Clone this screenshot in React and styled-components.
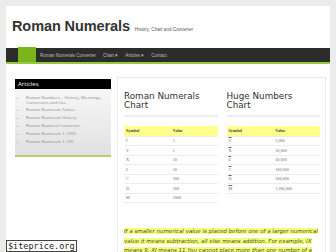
import styled, { createGlobalStyle } from "styled-components";

const Global = createGlobalStyle`
  html, body { margin: 0; padding: 0; }
  body {
    background: #ebebeb;
    font-family: "Liberation Sans", Arial, sans-serif;
    width: 336px;
    height: 252px;
    overflow: hidden;
  }
`;

const Page = styled.div`
  margin: 6px 6px 0;
  width: 324px;
  height: 246px;
  background: #fff;
  position: relative;
  overflow: hidden;
`;

const Header = styled.header`
  display: flex;
  align-items: baseline;
  gap: 5px;
  padding: 12px 0 0 6px;
  height: 30px;
  box-sizing: border-box;
`;

const Title = styled.h1`
  margin: 0;
  font-size: 14.5px;
  font-weight: 700;
  color: #333;
  letter-spacing: -0.1px;
`;

const Tagline = styled.span`
  font-size: 4.6px;
  color: #555;
`;

const Nav = styled.nav`
  margin-top: 12px;
  height: 14px;
  background: #2c2c2c;
  border-bottom: 2px solid #94c83d;
  display: flex;
  align-items: stretch;
  padding-left: 12px;
`;

const Home = styled.div`
  width: 18px;
  margin-top: -1px;
  background: #7bb51e;
`;

const NavItem = styled.a`
  display: flex;
  align-items: center;
  font-size: 4.5px;
  color: #bdbdbd;
  margin-left: ${(p) => p.$gap}px;
`;

const Body = styled.div`
  display: flex;
  align-items: flex-start;
  gap: 6px;
  padding: 13px 4px 0 9px;
`;

const Side = styled.aside`
  width: 96px;
  flex: none;
  margin-top: 2px;
`;

const SideHead = styled.div`
  background: #000;
  color: #fff;
  font-family: "Open Sans", sans-serif;
  font-size: 6px;
  height: 10px;
  line-height: 10px;
  padding-left: 3px;
`;

const SideList = styled.ul`
  margin: 0;
  padding: 6px 6px 8px 11px;
  background: linear-gradient(#f7f7f7, #e1e1e1);
  border-bottom: 2px solid #b6cd70;
  list-style: disc;
  font-family: "Open Sans", sans-serif;
  font-size: 4.3px;
  line-height: 4.6px;
  color: #8a8a8a;

  li { margin-bottom: 3.3px; }
  li::marker { font-size: 3.5px; }
`;

const Main = styled.main`
  flex: 1;
  height: 240px;
  border: 1px solid #e8e8e8;
  background: #fff;
  padding: 14px 5px 0 6px;
  box-sizing: border-box;
`;

const Columns = styled.div`
  display: flex;
  gap: 9px;
`;

const Col = styled.section`
  flex: 1;
`;

const H2 = styled.h2`
  margin: 0;
  font-family: "DejaVu Sans", sans-serif;
  font-weight: 400;
  font-size: 8.8px;
  line-height: 8.8px;
  color: #333;
  padding-bottom: 5px;
  border-bottom: 2px solid #eeeeee;

  span {
    display: block;
    max-width: 80px;
  }
`;

const Table = styled.table`
  margin-top: 9px;
  width: 100%;
  border-collapse: collapse;
  font-family: "Liberation Serif", serif;
  font-size: 4.2px;
  color: #666;

  th {
    background: #ffff8e;
    text-align: left;
    font-weight: 700;
    height: 10px;
    padding: 0 2px;
    color: #444;
  }
  td {
    height: 8.5px;
    padding: 0 2px;
    border: 1px solid #ececec;
    border-left: none;
    border-right: none;
  }
  th:last-child, td:last-child { width: 50%; }
`;

const Over = styled.span`
  text-decoration: overline;
`;

const Note = styled.p`
  margin: 24px 0 0;
  font-family: "DejaVu Sans", sans-serif;
  font-style: italic;
  font-size: 5.5px;
  line-height: 9.4px;
  color: #4d4d1a;

  span {
    background: #f4ff7a;
  }
`;

const Badge = styled.div`
  position: absolute;
  left: 0;
  bottom: 0;
  background: #fff;
  border: 1px solid #444;
  font-family: "DejaVu Sans Mono", monospace;
  font-size: 8.5px;
  line-height: 10px;
  padding: 0 1px;
  color: #222;
`;

const chart = [
  ["I", "1"],
  ["V", "5"],
  ["X", "10"],
  ["L", "50"],
  ["C", "100"],
  ["D", "500"],
  ["M", "1000"],
];

const huge = [
  ["V", "5,000"],
  ["X", "10,000"],
  ["L", "50,000"],
  ["C", "100,000"],
  ["D", "500,000"],
  ["M", "1,000,000"],
];

const articles = [
  "Roman Numbers – History, Meanings, Conversion and Use",
  "Roman Numerals Tattoo",
  "Roman Numerals History",
  "Roman Numeral Converter",
  "Roman Numerals 1-1000",
  "Roman Numerals 1-100",
];

export default function App() {
  return (
    <>
      <Global />
      <Page>
        <Header>
          <Title>Roman Numerals</Title>
          <Tagline>History, Chart and Converter</Tagline>
        </Header>
        <Nav>
          <Home />
          <NavItem $gap={4}>Roman Numerals Converter</NavItem>
          <NavItem $gap={7}>Chart ▾</NavItem>
          <NavItem $gap={7}>Articles ▾</NavItem>
          <NavItem $gap={7}>Contact</NavItem>
        </Nav>
        <Body>
          <Side>
            <SideHead>Articles</SideHead>
            <SideList>
              {articles.map((a) => (
                <li key={a}>{a}</li>
              ))}
            </SideList>
          </Side>
          <Main>
            <Columns>
              <Col>
                <H2>
                  <span>Roman Numerals Chart</span>
                </H2>
                <Table>
                  <thead>
                    <tr>
                      <th>Symbol</th>
                      <th>Value</th>
                    </tr>
                  </thead>
                  <tbody>
                    {chart.map(([s, v]) => (
                      <tr key={s}>
                        <td>{s}</td>
                        <td>{v}</td>
                      </tr>
                    ))}
                  </tbody>
                </Table>
              </Col>
              <Col>
                <H2>
                  <span>Huge Numbers Chart</span>
                </H2>
                <Table>
                  <thead>
                    <tr>
                      <th>Symbol</th>
                      <th>Value</th>
                    </tr>
                  </thead>
                  <tbody>
                    {huge.map(([s, v]) => (
                      <tr key={s}>
                        <td>
                          <Over>{s}</Over>
                        </td>
                        <td>{v}</td>
                      </tr>
                    ))}
                  </tbody>
                </Table>
              </Col>
            </Columns>
            <Note>
              <span>
                If a smaller numerical value is placed before one of a larger
                numerical value it means subtraction, all else means addition.
                For example, IX means 9, XI means 11.You cannot place more than
                one number of a smaller value before a larger one.
              </span>
            </Note>
          </Main>
        </Body>
        <Badge>$iteprice.org</Badge>
      </Page>
    </>
  );
}
